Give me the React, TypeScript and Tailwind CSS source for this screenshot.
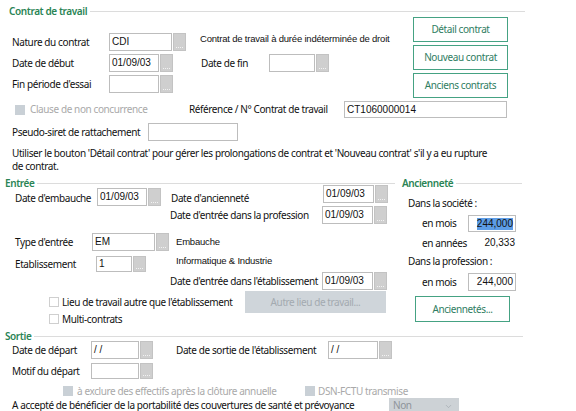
import { ChevronDown } from "lucide-react";

const label = "font-['Noto_Sans',sans-serif] text-[10px] tracking-[-0.4px] text-[#111111] leading-[13px] whitespace-nowrap";
const data = "font-['Liberation_Sans',Arial,sans-serif] text-[9.5px] tracking-[-0.2px] text-[#111111] whitespace-nowrap";
const value = "font-['Liberation_Sans',Arial,sans-serif] text-[10px] text-[#111111] whitespace-nowrap leading-[12px]";
const heading = "font-['Noto_Sans',sans-serif] text-[10px] tracking-[-0.4px] font-semibold text-[#2a8455] leading-[12px] whitespace-nowrap";

const Dots = () => (
  <div className="w-[13px] h-full ml-px bg-[#cfcfcf] border border-[#c3c3c3] flex items-end justify-center pb-[2px]">
    <span className="block w-[7px] h-px border-t border-dotted border-[#f2f2f2]" />
  </div>
);

const Field = ({ w, v = "", btn = true, right = false, sel = false }: { w: string; v?: string; btn?: boolean; right?: boolean; sel?: boolean }) => (
  <div className="flex h-full">
    <div className={`${w} h-full border border-[#bdbdbd] bg-white flex items-center px-[2px] ${right ? "justify-end" : ""}`}>
      <span className={`${value} ${sel ? "bg-[#5d9de6] text-[#0b2a5c]" : ""}`}>{v}</span>
    </div>
    {btn && <Dots />}
  </div>
);

const Box = ({ off = false }: { off?: boolean }) => (
  <div className={`w-[10px] h-[10px] shrink-0 border ${off ? "bg-[#c9d0d6] border-[#c9d0d6]" : "bg-white border-[#cfcfcf]"}`} />
);

const GreenButton = ({ text, cls }: { text: string; cls: string }) => (
  <button className={`${cls} border-[1.5px] border-[#45a283] bg-white flex items-center justify-center ${label} !text-[#2f7d62]`}>
    {text}
  </button>
);

const Section = ({ title, w }: { title: string; w: string }) => (
  <div className={`flex items-center ${w}`}>
    <span className={heading}>{title}</span>
    <div className="flex-1 ml-[3px] h-px bg-[#dcdcdc]" />
  </div>
);

export default function App() {
  return (
    <div className="w-[576px] h-[411px] overflow-hidden bg-white relative">
      {/* Contrat de travail */}
      <div className="mt-[5px] pl-[9px] h-[12px] flex items-center">
        <Section title="Contrat de travail" w="w-[516px]" />
      </div>

      <div className="flex">
        <div className="w-[413px] pt-[16px] flex flex-col gap-[3px]">
          <div className="h-[18px] flex items-start pl-[12px]">
            <span className={`${label} w-[97px] self-center`}>Nature du contrat</span>
            <Field w="w-[63px]" v="CDI" />
            <span className={`${data} ml-[14px] mt-[-1px]`}>Contrat de travail à durée indéterminée de droit</span>
          </div>
          <div className="h-[18px] flex items-center pl-[12px]">
            <span className={`${label} w-[97px]`}>Date de début</span>
            <Field w="w-[50px]" v="01/09/03" />
            <span className={`${label} ml-[28px] w-[68px]`}>Date de fin</span>
            <Field w="w-[46px]" />
          </div>
          <div className="h-[18px] flex items-center pl-[12px]">
            <span className={`${label} w-[97px]`}>Fin période d'essai</span>
            <Field w="w-[50px]" />
          </div>
        </div>
        <div className="flex flex-col gap-[3px]">
          <GreenButton text="Détail contrat" cls="w-[95px] h-[25px]" />
          <GreenButton text="Nouveau contrat" cls="w-[95px] h-[25px]" />
          <GreenButton text="Anciens contrats" cls="w-[95px] h-[25px]" />
        </div>
      </div>

      <div className="mt-[3px] h-[17px] flex items-center pl-[15px]">
        <Box off />
        <span className={`${label} ml-[5px] w-[159px] !text-[#a9a9a9]`}>Clause de non concurrence</span>
        <span className={`${label} w-[155px]`}>Référence / N° Contrat de travail</span>
        <Field w="w-[163px]" v="CT1060000014" btn={false} />
      </div>

      <div className="mt-[5px] h-[18px] flex items-center pl-[12px]">
        <span className={`${label} w-[136px]`}>Pseudo-siret de rattachement</span>
        <Field w="w-[90px]" btn={false} />
      </div>

      <p className={`${label} mt-[6px] pl-[12px]`}>
        Utiliser le bouton 'Détail contrat' pour gérer les prolongations de contrat et 'Nouveau contrat' s'il y a eu rupture
        <br />
        de contrat.
      </p>

      {/* Entrée / Ancienneté */}
      <div className="mt-[4px] h-[12px] flex items-center">
        <div className="pl-[5px] w-[400px]">
          <Section title="Entrée" w="w-[390px]" />
        </div>
        <div className="pl-[2px]">
          <Section title="Ancienneté" w="w-[120px]" />
        </div>
      </div>

      <div className="flex">
        <div className="w-[402px] mt-[-4px]">
          <div className="h-[21px] flex items-start pl-[15px]">
            <span className={`${label} w-[82px] mt-[7px]`}>Date d'embauche</span>
            <div className="h-[18px] mt-[3px]">
              <Field w="w-[50px]" v="01/09/03" />
            </div>
            <span className={`${label} ml-[10px] w-[152px] mt-[7px]`}>Date d'ancienneté</span>
            <div className="h-[18px]">
              <Field w="w-[51px]" v="01/09/03" />
            </div>
          </div>
          <div className="h-[18px] flex items-center pl-[170px]">
            <span className={`${label} w-[152px]`}>Date d'entrée dans la profession</span>
            <Field w="w-[51px]" v="01/09/03" />
          </div>
          <div className="mt-[9px] h-[18px] flex items-center pl-[15px]">
            <span className={`${label} w-[77px]`}>Type d'entrée</span>
            <Field w="w-[63px]" v="EM" />
            <span className={`${data} ml-[7px]`}>Embauche</span>
          </div>
          <div className="mt-[5px] h-[16px] flex items-start pl-[15px]">
            <span className={`${label} w-[81px] mt-[2px]`}>Etablissement</span>
            <Field w="w-[36px]" v="1" />
            <span className={`${data} ml-[30px] leading-[10px]`}>Informatique &amp; Industrie</span>
          </div>
          <div className="h-[18px] flex items-center pl-[170px]">
            <span className={`${label} w-[152px]`}>Date d'entrée dans l'établissement</span>
            <Field w="w-[51px]" v="01/09/03" />
          </div>
          <div className="mt-px h-[22px] flex items-center pl-[49px]">
            <Box />
            <span className={`${label} ml-[3px] w-[183px]`}>Lieu de travail autre que l'établissement</span>
            <button className={`w-[141px] h-full bg-[#cfd5da] ${label} !text-[#a3aab0]`}>Autre lieu de travail...</button>
          </div>
          <div className="h-[12px] flex items-center pl-[49px]">
            <Box />
            <span className={`${label} ml-[3px]`}>Multi-contrats</span>
          </div>
        </div>

        <div className="pl-[6px]">
          <div className="mt-[8px] h-[13px] flex items-center">
            <span className={label}>Dans la société :</span>
          </div>
          <div className="mt-[5px] h-[17px] flex items-center pl-[14px]">
            <span className={`${label} w-[46px]`}>en mois</span>
            <Field w="w-[48px]" v="244,000" btn={false} right sel />
          </div>
          <div className="mt-[4px] h-[14px] flex items-center pl-[14px]">
            <span className={`${label} w-[46px]`}>en années</span>
            <span className={`${value} w-[48px] text-right pr-px`}>20,333</span>
          </div>
          <div className="mt-[5px] h-[13px] flex items-center">
            <span className={label}>Dans la profession :</span>
          </div>
          <div className="mt-[5px] h-[18px] flex items-center pl-[14px]">
            <span className={`${label} w-[46px]`}>en mois</span>
            <Field w="w-[48px]" v="244,000" btn={false} right />
          </div>
          <div className="mt-[5px] pl-[7px]">
            <GreenButton text="Anciennetés..." cls="w-[95px] h-[26px]" />
          </div>
        </div>
      </div>

      {/* Sortie */}
      <div className="mt-[6px] h-[10px] flex items-center pl-[5px]">
        <Section title="Sortie" w="w-[518px]" />
      </div>
      <div className="h-[18px] flex items-center pl-[12px]">
        <span className={`${label} w-[79px]`}>Date de départ</span>
        <Field w="w-[48px]" v="/ /" />
        <span className={`${label} ml-[23px] w-[152px]`}>Date de sortie de l'établissement</span>
        <Field w="w-[50px]" v="/ /" />
      </div>
      <div className="mt-[4px] h-[16px] flex items-center pl-[12px]">
        <span className={`${label} w-[79px]`}>Motif du départ</span>
        <Field w="w-[48px]" />
      </div>
      <div className="mt-[6px] h-[12px] flex items-center pl-[63px]">
        <Box off />
        <span className={`${label} ml-[4px] w-[228px] !text-[#a9a9a9]`}>à exclure des effectifs après la clôture annuelle</span>
        <Box off />
        <span className={`${label} ml-[3px] !text-[#a9a9a9]`}>DSN-FCTU transmise</span>
      </div>
      <div className="mt-px h-[18px] flex items-start pl-[12px]">
        <span className={`${label} w-[377px] mt-[2px] !leading-[11px]`}>A accepté de bénéficier de la portabilité des couvertures de santé et prévoyance</span>
        <div className="w-[70px] h-full bg-[#cdd2d6] flex items-start justify-between pl-[4px] pr-[6px] pt-[2px]">
          <span className={`${label} !leading-[11px] !text-[#8d949a]`}>Non</span>
          <ChevronDown size={9} strokeWidth={1.5} className="text-[#9aa1a7] mt-[2px]" />
        </div>
      </div>
    </div>
  );
}
